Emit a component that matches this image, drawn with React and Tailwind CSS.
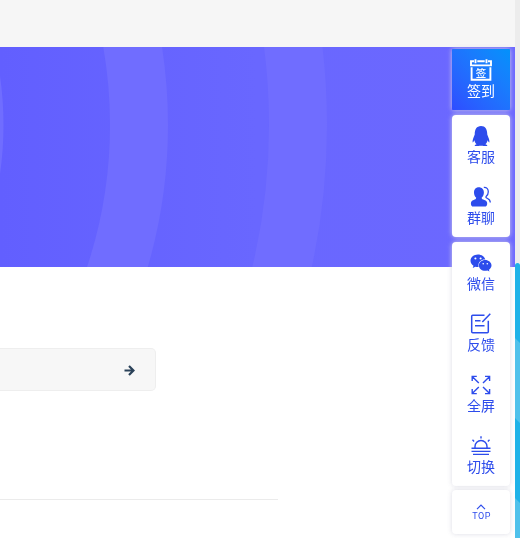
import React from "react";
import { FaQq, FaWeixin } from "react-icons/fa";

const stroke = { fill: "none", stroke: "currentColor", strokeWidth: 1.5 };

function CalendarIcon() {
  return (
    <svg width="22" height="22" viewBox="0 0 22 22" {...stroke} strokeWidth="1.9">
      <path d="M4 2.2H1V6.4H21V2.2H18M7.3 2.2H14.7M5.5 0.3V4.2M16.5 0.3V4.2M1.6 8.2V20.7H20.4V8.2" />
      <text x="11" y="17.8" textAnchor="middle" fontSize="10.5" fill="currentColor" stroke="none" className="font-['Noto_Sans_CJK_SC',sans-serif] font-medium">签</text>
    </svg>
  );
}

function GroupIcon() {
  return (
    <svg width="22" height="22" viewBox="0 0 22 22" {...stroke}>
      <path fill="currentColor" stroke="none" d="M8.8 1.2c-3 0-4.8 2.2-4.8 5.2 0 2.200.8 4.200 2.200 5.300-.1 1.300-1 1.700-2.500 2.300C1.900 14.700.9 15.600.9 17.500c0 1.900.8 3.100 2.400 3.100h11.500c1.600 0 2.400-1.200 2.400-3.100 0-1.900-1-2.800-2.800-3.500-1.700-.6-2.700-1-2.800-2.300 1.500-1.100 2.300-3.100 2.300-5.300 0-3-2-5.200-5.100-5.200z" />
      <path strokeWidth="1.300" d="M13.800 1.300c2.800-.2 4.500 1.700 4.500 4.400 0 2.100-.8 3.600-2.200 4.800-.5.900.1 1.500 1.400 2 1.900.8 2.800 1.800 2.800 4.100" />
    </svg>
  );
}

function FeedbackIcon() {
  return (
    <svg width="22" height="22" viewBox="0 0 22 22" {...stroke}>
      <path d="M14.500 2.200H2.700Q1.700 2.200 1.700 3.200V18.700Q1.700 19.700 2.700 19.700H17.300Q18.300 19.700 18.300 18.700V7.800M20.300 0.800L12.300 9M5 7.800H10.500M5 12.800H14.500" />
    </svg>
  );
}

function ExpandIcon() {
  return (
    <svg width="22" height="22" viewBox="0 0 22 22" {...stroke} strokeWidth="1.400">
      <path d="M8.800 9L2.200 2.400M2.200 7V2.400H6.800M13 9L19.600 2.400M15 2.400H19.600V7M8.800 13L2.200 19.600M2.200 15V19.600H6.800M13 13L19.600 19.600M15 19.600H19.600V15" />
    </svg>
  );
}

function SunsetIcon() {
  return (
    <svg width="22" height="22" viewBox="0 0 22 22" {...stroke} strokeWidth="1.400">
      <path d="M1.500 13.300H20.500M5 13V11.500a6 6 0 0 1 12 0V13M1.500 16.400H20.500M3 19.400H19M11 1.200V3.500M2.500 4.800L4.100 6.400M19.500 4.800L17.900 6.400" />
    </svg>
  );
}

function ArrowIcon() {
  return (
    <svg width="11" height="11" viewBox="0 0 11 11" fill="none" stroke="currentColor" strokeWidth="2.200">
      <path d="M0.500 5.500H9M5 0.900L9.500 5.500L5 10.100" />
    </svg>
  );
}

function Item({ icon, label }) {
  return (
    <a className="flex h-[61px] flex-col items-center pt-[10px]">
      <span className="flex h-[22px] w-[22px] items-center justify-center">{icon}</span>
      <span className="-mt-px text-sm leading-5">{label}</span>
    </a>
  );
}

function Banner() {
  return (
    <div className="h-[220px] w-[515px] bg-gradient-to-r from-[#625fff] via-[#6967ff] to-[#6c68ff]">
      <svg width="515" height="220" fill="none" stroke="#706dff">
        <circle cx="-340" cy="78" r="341" strokeWidth="5" />
        <circle cx="-340" cy="78" r="479" strokeWidth="58" />
        <circle cx="-340" cy="78" r="638" strokeWidth="58" />
      </svg>
    </div>
  );
}

function Scrollbar() {
  return (
    <div className="fixed inset-y-0 right-0 w-[5px] bg-[#ececec] pt-[263px]">
      <div className="h-full overflow-hidden rounded-t-[3px] bg-[#1eb2e8]">
        <svg width="5" height="275" fill="#4fc1eb">
          <path d="M0 75L5 80V160L0 155ZM0 235L5 240V275H0Z" />
        </svg>
      </div>
    </div>
  );
}

const card = "rounded-[4px] bg-white shadow-[0_0_5px_rgba(215,215,225,0.9)]";

export default function App() {
  return (
    <div className="h-[538px] w-[520px] overflow-hidden bg-white font-['Noto_Sans_CJK_SC',sans-serif] text-[#2d4cec]">
      <header className="h-[47px] bg-[#f6f6f6]" />
      <Banner />
      <main className="pt-[81px]">
        <div className="flex h-[43px] w-[156px] items-center justify-end rounded-r-[5px] border border-l-0 border-[#eeeeee] bg-[#f7f7f7] pr-[20px] pt-[2px] text-[#2b4259]">
          <ArrowIcon />
        </div>
        <div className="mt-[108px] w-[278px] border-t border-[#ebebeb]" />
      </main>
      <Scrollbar />
      <aside className="fixed right-[10px] top-[49px] flex w-[58px] flex-col">
        <div className="mb-[5px] rounded-[1px] bg-gradient-to-tr from-[#2f4cff] to-[#0292fb] text-white shadow-[0_0_5px_rgba(215,215,225,0.9)]">
          <Item icon={<CalendarIcon />} label="签到" />
        </div>
        <div className={`mb-[5px] ${card}`}>
          <Item icon={<FaQq size={20} />} label="客服" />
          <Item icon={<GroupIcon />} label="群聊" />
        </div>
        <div className={`mb-[4px] ${card}`}>
          <Item icon={<FaWeixin size={22} />} label="微信" />
          <Item icon={<FeedbackIcon />} label="反馈" />
          <Item icon={<ExpandIcon />} label="全屏" />
          <Item icon={<SunsetIcon />} label="切换" />
        </div>
        <div className={`flex h-[44px] flex-col items-center pt-[14px] ${card}`}>
          <svg width="10" height="6" viewBox="0 0 10 6" fill="none" stroke="currentColor" strokeWidth="1.200">
            <path d="M1 5.200L5 1.200L9 5.200" />
          </svg>
          <span className="mt-[1px] pl-px font-['Roboto',sans-serif] text-[9px] leading-[10px] tracking-[0.5px]">TOP</span>
        </div>
      </aside>
    </div>
  );
}
